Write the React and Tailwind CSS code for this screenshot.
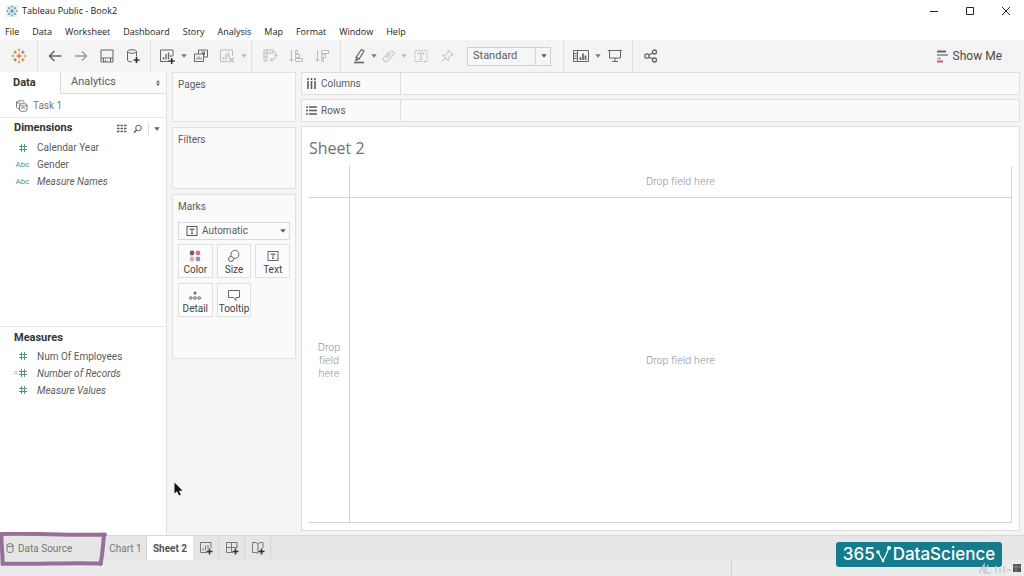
import React, { useState } from 'react';

// --- DATA ---
const menuItems = ['File', 'Data', 'Worksheet', 'Dashboard', 'Story', 'Analysis', 'Map', 'Format', 'Window', 'Help'];

const dimensions = [
    { name: 'Calendar Year', type: 'number' },
    { name: 'Gender', type: 'text' },
    { name: 'Measure Names', type: 'text', italic: true },
];

const measures = [
    { name: 'Num Of Employees', type: 'number' },
    { name: 'Number of Records', type: 'calc', italic: true },
    { name: 'Measure Values', type: 'number', italic: true },
];

// --- ICONS ---
const Icon = ({ size = 16, width, sw = 1, className = '', children }) => (
    <svg width={width || size} height={size} viewBox={`0 0 ${width || size} ${size}`} fill="none" stroke="currentColor" strokeWidth={sw} className={`shrink-0 ${className}`} aria-hidden="true">
        {children}
    </svg>
);

const Caret = ({ className = '' }) => (
    <Icon size={4} width={6} className={className}><path d="M0.3 0.3h5.4L3 3.8z" fill="currentColor" stroke="none" /></Icon>
);

const TableauMark = ({ size = 16, colors }) => (
    <svg width={size} height={size} viewBox="0 0 16 16" fill="none" strokeWidth="1.1" className="shrink-0" aria-hidden="true">
        <path d="M8 5.4v5.2M5.4 8h5.2" stroke={colors[0]} strokeWidth="1.4" />
        <path d="M4.2 2.6v3.2M2.6 4.2h3.2" stroke={colors[1]} />
        <path d="M11.8 2.6v3.2M10.2 4.2h3.2" stroke={colors[2]} />
        <path d="M4.2 10.2v3.2M2.6 11.8h3.2" stroke={colors[2]} />
        <path d="M11.8 10.2v3.2M10.2 11.8h3.2" stroke={colors[1]} />
        <path d="M8 .6v2.8M6.6 2h2.8M8 12.6v2.8M6.6 14h2.8" stroke={colors[3]} />
        <path d="M2 6.6v2.8M.6 8h2.8M14 6.6v2.8M12.6 8h2.8" stroke={colors[3]} />
    </svg>
);

const HashIcon = () => (
    <Icon size={10}><path d="M3.5 1v8M6.5 1v8M1 3.5h8M1 6.5h8" /></Icon>
);

const TextBoxIcon = ({ className }) => (
    <Icon size={12} className={className}>
        <rect x="1" y="1.5" width="10" height="9" />
        <path d="M4 5V4h4v1M6 4v4.5M5 8.5h2" />
    </Icon>
);

const PlusMark = ({ x, y }) => <path d={`M${x - 3} ${y}h6M${x} ${y - 3}v6`} stroke="#333" strokeWidth="1.6" />;

const BackIcon = () => <Icon sw={1.5}><path d="M14.5 8H2.5M7.5 3L2.5 8l5 5" /></Icon>;
const ForwardIcon = () => <Icon sw={1.3}><path d="M2 8h11.500M9 3.500L13.500 8 9 12.500" /></Icon>;
const SaveIcon = () => <Icon><path d="M2 2h12v12H2zM4.500 14v-4h7v4M6.500 12v2M2 10h2.500M11.500 10H14" /></Icon>;
const NewSourceIcon = () => (
    <Icon>
        <ellipse cx="7" cy="3.500" rx="4.500" ry="1.800" />
        <path d="M2.500 3.500v8.500c0 1.200 2 1.800 4.500 1.800M11.500 3.500v5" />
        <PlusMark x={11.5} y={12} />
    </Icon>
);
const NewSheetIcon = () => (
    <Icon>
        <path d="M14 8.500V2H1.500v11.500H10" />
        <path d="M4.500 11.500V9M7 11.500V6M9.500 11.500V4.500M11.800 9V7" strokeWidth="1.3" />
        <PlusMark x={12.7} y={13} />
    </Icon>
);
const DuplicateIcon = () => (
    <Icon>
        <path d="M5.500 6V2h9v7h-4" />
        <path d="M1.500 6h9v7.500h-9z" />
        <path d="M8.500 4h3v3M9 5.500h2.500M4 11.500v-2M6 11.500V8.500M8 11.500V9.500" />
    </Icon>
);
const ClearIcon = () => (
    <Icon>
        <path d="M13.500 8V2H1.500v11.500H9" />
        <path d="M4.500 11.500V9M7 11.500V6M9.500 9V4.500" strokeWidth="1.300" />
        <path d="M10 9.500l5 5M15 9.500l-5 5" strokeWidth="1.300" />
    </Icon>
);
const SwapIcon = () => (
    <Icon>
        <path d="M2 2h3v3H2zM5 2h6v3H5M2 5v8h3V5M2 9h3" />
        <path d="M11 3.500c2 0 3 1.500 3 3.500 0 3-2 5-5 5M12.500 8L14 6.500 15.500 8M10.500 10L8.500 12l2 2" />
    </Icon>
);
const SortAscIcon = () => (
    <Icon><path d="M3.500 2v11M1.500 11l2 2.500 2-2.500M7.500 2.500h2v3h-2zM7.500 6.500h4v3h-4zM7.500 10.500h7v3h-7z" /></Icon>
);
const SortDescIcon = () => (
    <Icon><path d="M3.500 2v11M1.500 11l2 2.500 2-2.500M7.500 2.500h7v3h-7zM7.500 6.500h4v3h-4zM7.500 10.500h2v3h-2z" /></Icon>
);
const HighlightIcon = () => (
    <Icon>
        <path d="M10.500 1.500l2.500 1.500-5 8-3 1.500.300-3.500zM5.300 9l2.700 2" strokeWidth="1.200" />
        <path d="M3 14.500h10" strokeWidth="1.600" />
    </Icon>
);
const ClipIcon = () => (
    <Icon><path d="M4.500 9.500l5-5.500a2 2 0 0 1 3 2.700l-6 6.500a2.600 2.600 0 0 1-3.800-3.500l5.500-6M6 10.500l4-4.500" /></Icon>
);
const LabelIcon = () => (
    <Icon><path d="M2 2.500h12v11H2z" strokeDasharray="2 1" /><path d="M5 6.500v-1.500h6v1.500M8 5v6.500M6.800 11.500h2.400" /></Icon>
);
const PinIcon = () => (
    <Icon><path d="M9 2l5 5-2 .3-2.500 2.500-.3 3L3.700 7.300l3-.3L9 4.200zM6.400 9.800L2.500 13.500" /></Icon>
);
const CardsIcon = () => (
    <Icon width={18}>
        <path d="M1.500 2.500h15v11h-15zM5.500 2.500v11M1.500 5.500h4M1.500 8h4M1.500 10.500h4" />
        <path d="M8.500 12V9M11 12V5.500M13.500 12V7.500" strokeWidth="1.700" />
    </Icon>
);
const PresentIcon = () => (
    <Icon><path d="M1 2.500h14M2.500 2.500v7.500h11V2.500M8 10v3.500M5 13.500h6" /></Icon>
);
const ShareIcon = () => (
    <Icon sw={1.3}>
        <circle cx="4" cy="8" r="2.200" />
        <circle cx="11.500" cy="4" r="2" />
        <circle cx="11.500" cy="12" r="2" />
        <path d="M6 7l3.700-2M6 9l3.700 2" />
    </Icon>
);

// --- SMALL PARTS ---
const ToolButton = ({ label, narrow, disabled, children }) => (
    <button type="button" aria-label={label} disabled={disabled} className={`flex h-6 items-center justify-center text-[#666] disabled:text-[#bcbcbc] ${narrow ? 'w-5' : 'w-6'}`}>
        {children}
    </button>
);

const CaretButton = ({ label, disabled }) => (
    <button type="button" aria-label={label} disabled={disabled} className="flex h-6 w-[6px] items-center text-[#777] disabled:text-[#bcbcbc]">
        <Caret />
    </button>
);

const Field = ({ field }) => (
    <li>
        <button type="button" className="flex h-[17px] w-full items-center text-left">
            <span className="flex w-[37px] items-center justify-center pl-2 text-[8px] text-[#4f958e]">
                {field.type === 'text' && 'Abc'}
                {field.type === 'number' && <HashIcon />}
                {field.type === 'calc' && <><span className="w-1">=</span><HashIcon /><span className="w-1" /></>}
            </span>
            <span className={field.italic ? 'italic' : ''}>{field.name}</span>
        </button>
    </li>
);

const Card = ({ title, className, children }) => (
    <section className={`border border-[#e2e2e2] bg-[#fafafa] px-[5px] py-1 ${className}`}>
        <h2 className="leading-4">{title}</h2>
        {children}
    </section>
);

const MarkButton = ({ label, children }) => (
    <button type="button" className="flex h-[34px] flex-col items-center justify-between border border-[#e0e0e0] bg-[#fcfcfc] pt-1 leading-[14px] text-[#444]">
        <span className="flex h-[14px] items-center text-[#666]">{children}</span>
        {label}
    </button>
);

const Shelf = ({ label, icon }) => (
    <div className="flex h-[23px] border border-[#dedede] bg-[#fafafa]">
        <div className="flex w-[99px] items-center gap-1 border-r border-[#dedede] pl-1">
            {icon}
            <span>{label}</span>
        </div>
        <div className="flex-1" />
    </div>
);

// --- MAIN COMPONENT ---
const App = () => {
    const [fit, setFit] = useState('Standard');
    const [markType, setMarkType] = useState('Automatic');

    return (
        <div className="relative flex min-h-screen flex-col overflow-hidden bg-[#f4f4f4] font-['Roboto','Liberation_Sans',sans-serif] text-[10px] text-[#5c5c5c]">
            {/* --- TITLE BAR --- */}
            <header className="bg-white font-['Open_Sans','Noto_Sans',sans-serif] text-[#222]">
                <div className="flex h-[22px] items-center justify-between pl-[6px]">
                    <div className="flex items-center gap-1">
                        <span className="bg-[#e6f0f4]"><TableauMark size={12} colors={['#3f7f98', '#4f8ba3', '#4f8ba3', '#6da0b4']} /></span>
                        <h1 className="text-[9px]">Tableau Public - Book2</h1>
                    </div>
                    <div className="flex">
                        <button type="button" aria-label="Minimize" className="flex w-9 justify-center"><Icon size={10}><path d="M1 5.500h8" /></Icon></button>
                        <button type="button" aria-label="Maximize" className="flex w-9 justify-center"><Icon size={10}><path d="M1.500 1.500h7v7h-7z" /></Icon></button>
                        <button type="button" aria-label="Close" className="flex w-9 justify-center"><Icon size={10}><path d="M1 1l8 8M9 1L1 9" /></Icon></button>
                    </div>
                </div>
                <nav className="flex h-[18px] items-center gap-[13px] px-[5px] pt-[2px] text-[9px]">
                    {menuItems.map((item) => <button type="button" key={item}>{item}</button>)}
                </nav>
            </header>

            {/* --- TOOLBAR --- */}
            <div className="flex h-8 items-center bg-[#f4f4f4]">
                <div className="flex h-full w-[38px] items-center justify-center border-r border-[#e0e0e0]">
                    <TableauMark colors={['#e8762d', '#c9803f', '#6b7c93', '#c9a55c']} />
                </div>
                <div className="flex h-full items-center gap-[2px] border-r border-[#e0e0e0] px-[5px]">
                    <ToolButton label="Back"><BackIcon /></ToolButton>
                    <ToolButton label="Forward"><span className="text-[#999]"><ForwardIcon /></span></ToolButton>
                    <ToolButton label="Save"><SaveIcon /></ToolButton>
                    <ToolButton label="New data source"><NewSourceIcon /></ToolButton>
                </div>
                <div className="flex h-full items-center gap-[2px] border-r border-[#e0e0e0] px-1">
                    <ToolButton label="New worksheet"><NewSheetIcon /></ToolButton>
                    <CaretButton label="New worksheet options" />
                    <ToolButton label="Duplicate"><DuplicateIcon /></ToolButton>
                    <ToolButton label="Clear sheet" disabled><ClearIcon /></ToolButton>
                    <CaretButton label="Clear options" disabled />
                </div>
                <div className="flex h-full items-center gap-[2px] border-r border-[#e0e0e0] px-[6px]">
                    <ToolButton label="Swap" disabled><SwapIcon /></ToolButton>
                    <ToolButton label="Sort ascending" disabled><SortAscIcon /></ToolButton>
                    <ToolButton label="Sort descending" disabled><SortDescIcon /></ToolButton>
                </div>
                <div className="flex h-full items-center gap-[2px] border-r border-[#e0e0e0] pl-2 pr-3">
                    <ToolButton label="Highlight" narrow><HighlightIcon /></ToolButton>
                    <CaretButton label="Highlight options" />
                    <ToolButton label="Group" narrow disabled><ClipIcon /></ToolButton>
                    <CaretButton label="Group options" disabled />
                    <ToolButton label="Show labels" disabled><LabelIcon /></ToolButton>
                    <ToolButton label="Fix axes" disabled><PinIcon /></ToolButton>
                    <label className="relative ml-[6px] block">
                        <select aria-label="Fit" value={fit} onChange={(e) => setFit(e.target.value)} className="block h-[19px] w-[84px] appearance-none border border-[#cfcfcf] bg-[#f6f6f6] pl-[5px] text-[11px] leading-4">
                            <option>Standard</option>
                            <option>Fit Width</option>
                            <option>Fit Height</option>
                            <option>Entire View</option>
                        </select>
                        <span className="pointer-events-none absolute inset-y-0 right-0 flex w-4 items-center justify-center border-l border-[#d6d6d6]"><Caret /></span>
                    </label>
                </div>
                <div className="flex h-full items-center gap-[2px] border-r border-[#e0e0e0] px-[5px]">
                    <ToolButton label="Show cards"><CardsIcon /></ToolButton>
                    <CaretButton label="Card options" />
                    <ToolButton label="Presentation mode"><PresentIcon /></ToolButton>
                </div>
                <div className="pl-[6px]"><ToolButton label="Share"><ShareIcon /></ToolButton></div>
                <button type="button" className="ml-auto mr-[22px] flex items-center gap-1 text-[12px] text-[#4a4a4a]">
                    <Icon size={13}>
                        <path d="M1 1.500h9" stroke="#666" strokeWidth="2" />
                        <path d="M1 5h11" stroke="#8aa2bb" strokeWidth="2" />
                        <path d="M1 8.500h4" stroke="#e59a9a" strokeWidth="2" />
                        <path d="M1 11.500h6" stroke="#c9616b" strokeWidth="2" />
                    </Icon>
                    Show Me
                </button>
            </div>

            <main className="flex flex-1">
                {/* --- DATA PANE --- */}
                <aside className="flex w-[167px] shrink-0 flex-col border-r border-[#e2e2e2] bg-white">
                    <div className="flex h-[22px]">
                        <button type="button" className="w-[60px] pl-[13px] text-left text-[11px] font-bold text-[#333]">Data</button>
                        <button type="button" className="flex flex-1 items-center justify-between border-b border-l border-[#dcdcdc] bg-[#fafafa] pl-[10px] pr-[6px] text-[11px]">
                            Analytics
                            <Icon size={6} width={4}><path d="M2 0L3.800 2.500H.2zM2 6L3.800 3.500H.2z" fill="currentColor" stroke="none" /></Icon>
                        </button>
                    </div>
                    <button type="button" className="flex h-6 items-center gap-[5px] border-b border-[#e6e6e6] pl-[15px] text-[#777]">
                        <Icon size={13}>
                            <path d="M9 3.500V2.500C9 1.500 1.500 1.500 1.500 3v5c0 1 1 1.500 2.500 1.500M1.500 3c0 1.200 3 1.500 4 1" />
                            <path d="M4.500 6c0-1.800 7.500-1.800 7.500 0v5c0 1.800-7.500 1.800-7.500 0zM4.500 6c0 1.500 7.500 1.500 7.500 0M6 10l2-1.500 2 1" />
                        </Icon>
                        Task 1
                    </button>
                    <section className="flex-1 basis-0">
                        <div className="flex h-[21px] items-center pl-[14px] pr-[6px]">
                            <h2 className="flex-1 text-[11px] font-bold text-[#333]">Dimensions</h2>
                            <button type="button" aria-label="View data">
                                <Icon size={10}><path d="M0 1.500h10M0 4.500h10M0 7.500h10" strokeDasharray="2.500 1" strokeWidth="1.500" /></Icon>
                            </button>
                            <button type="button" aria-label="Find field" className="ml-[6px]">
                                <Icon size={10}><circle cx="5.500" cy="4" r="2.800" /><path d="M3.500 6L1 8.800" strokeWidth="1.300" /></Icon>
                            </button>
                            <button type="button" aria-label="Pane options" className="ml-[5px] flex h-3 items-center border-l border-[#ddd] pl-[5px]"><Caret /></button>
                        </div>
                        <ul>{dimensions.map((f) => <Field key={f.name} field={f} />)}</ul>
                    </section>
                    <section className="flex-1 basis-0 border-t border-[#e6e6e6] pt-px">
                        <h2 className="pl-[14px] text-[11px] font-bold leading-5 text-[#333]">Measures</h2>
                        <ul>{measures.map((f) => <Field key={f.name} field={f} />)}</ul>
                    </section>
                </aside>

                {/* --- CARDS --- */}
                <div className="flex w-[134px] shrink-0 flex-col gap-[5px] px-[5px]">
                    <Card title="Pages" className="h-[50px]" />
                    <Card title="Filters" className="h-[62px]" />
                    <Card title="Marks" className="h-[165px]">
                        <label className="relative mt-[7px] block">
                            <TextBoxIcon className="absolute left-2 top-[3px]" />
                            <select aria-label="Mark type" value={markType} onChange={(e) => setMarkType(e.target.value)} className="block h-[18px] w-full appearance-none border border-[#d9d9d9] bg-[#fbfbfb] pl-[23px] text-[10px] leading-4">
                                <option>Automatic</option>
                                <option>Bar</option>
                                <option>Line</option>
                                <option>Text</option>
                            </select>
                            <Caret className="absolute right-1 top-[7px]" />
                        </label>
                        <div className="mt-1 grid grid-cols-3 gap-x-1 gap-y-[5px]">
                            <MarkButton label="Color">
                                <Icon size={14}>
                                    <g stroke="none">
                                        <circle cx="4" cy="4" r="2.400" fill="#6e5f6b" />
                                        <circle cx="10" cy="4" r="2.400" fill="#d0728a" />
                                        <circle cx="4" cy="10" r="2.400" fill="#eaa99c" />
                                        <circle cx="10" cy="10" r="2.400" fill="#8399ab" />
                                    </g>
                                </Icon>
                            </MarkButton>
                            <MarkButton label="Size">
                                <Icon size={14}><path d="M4.500 7.500A4 4 0 1 1 7 9.300" /><circle cx="4" cy="10" r="2.500" /></Icon>
                            </MarkButton>
                            <MarkButton label="Text"><TextBoxIcon /></MarkButton>
                            <MarkButton label="Detail">
                                <Icon size={14}>
                                    <circle cx="7" cy="5" r="1.500" fill="currentColor" stroke="none" />
                                    <circle cx="2.800" cy="10" r="1.300" /><circle cx="7" cy="10" r="1.300" /><circle cx="11.200" cy="10" r="1.300" />
                                </Icon>
                            </MarkButton>
                            <MarkButton label="Tooltip">
                                <Icon size={14}><path d="M1.500 2.500h11v7H9v3L6.500 9.500h-5z" /></Icon>
                            </MarkButton>
                        </div>
                    </Card>
                </div>

                {/* --- SHELVES AND SHEET --- */}
                <div className="mb-1 mr-1 flex min-w-0 flex-1 flex-col gap-1">
                    <Shelf label="Columns" icon={<Icon size={11}><path d="M2 0v2M5.500 0v2M9 0v2M2 3v8M5.500 3v8M9 3v8" strokeWidth="1.600" /></Icon>} />
                    <Shelf label="Rows" icon={<Icon size={11}><path d="M0 2h2M0 5.500h2M0 9h2M3 2h8M3 5.500h8M3 9h8" strokeWidth="1.500" /></Icon>} />
                    <section className="flex flex-1 flex-col border border-[#dedede] bg-white p-[7px]">
                        <h2 className="h-8 pt-[2px] font-['Open_Sans',sans-serif] text-[16px] leading-6 text-[#707070]">Sheet 2</h2>
                        <div className="grid flex-1 grid-cols-[41px_1fr] grid-rows-[32px_1fr] border-b border-r border-[#d2d2d2] font-['Inter',sans-serif] font-light text-[#999]">
                            <div className="border-b border-r border-[#d2d2d2]" />
                            <div className="flex items-center justify-center border-b border-[#d2d2d2]">Drop field here</div>
                            <div className="flex items-center justify-center border-r border-[#d2d2d2] px-1 text-center leading-[13px]">Drop field here</div>
                            <div className="flex items-center justify-center">Drop field here</div>
                        </div>
                    </section>
                </div>
            </main>

            {/* --- SHEET TABS --- */}
            <footer className="bg-[#ebebeb]">
                <div className="flex h-[25px] border-t border-[#d8d8d8] bg-[#e6e6e6] text-[#777]">
                    <div className="relative flex w-[105px]">
                        <button type="button" className="flex flex-1 items-center gap-1 pl-[6px]">
                            <Icon size={10} width={8}><ellipse cx="4" cy="2.200" rx="3" ry="1.500" /><path d="M1 2.200v6c0 1.600 6 1.600 6 0v-6" /></Icon>
                            Data Source
                        </button>
                        <svg viewBox="0 0 108 36" className="pointer-events-none absolute -left-px -top-1 h-9 w-27" fill="none" stroke="#967099" strokeWidth="4" strokeLinecap="round" strokeLinejoin="round" aria-hidden="true">
                            <path d="M3 2C34 .8 70 3.800 106 2.500M105 3c-1 10-1.500 20-3.500 29M102 31.500c-34-1-66 1-98 0M3.500 32C4 22 2 12 2.500 2" />
                        </svg>
                    </div>
                    <button type="button" className="w-[42px] border-r border-[#d6d6d6]">Chart 1</button>
                    <button type="button" className="w-[46px] bg-white font-bold text-[#555]">Sheet 2</button>
                    <button type="button" aria-label="New worksheet tab" className="flex w-[26px] items-center justify-center border-r border-[#d6d6d6]">
                        <Icon size={14}><path d="M12 7V1.500H1.500v10H8M4 9.500V7M6.500 9.500V4.500M9 8V4" /><PlusMark x={10.5} y={10.5} /></Icon>
                    </button>
                    <button type="button" aria-label="New dashboard tab" className="flex w-[26px] items-center justify-center border-r border-[#d6d6d6]">
                        <Icon size={14}><path d="M12 7V1.500H1.500v10H8M6.500 1.500v10M1.500 6.500H12" /><PlusMark x={10.5} y={10.5} /></Icon>
                    </button>
                    <button type="button" aria-label="New story tab" className="flex w-[26px] items-center justify-center border-r border-[#d6d6d6]">
                        <Icon size={14}><path d="M12 7V1.500H9L7 3 5 1.500H1.500v10H5l2 1M7 3v9" /><PlusMark x={10.5} y={10.5} /></Icon>
                    </button>
                </div>
                <div className="flex h-4 justify-end">
                    <div className="w-[293px] border-l border-[#cfcfcf]" />
                </div>
            </footer>

            {/* --- WATERMARK LOGO --- */}
            <div className="absolute bottom-[9px] right-[22px] flex h-[25px] w-[166px] items-center justify-center rounded-[3px] bg-[#157c8d] font-['Inter',sans-serif] text-[17px] font-medium text-white">
                365
                <svg width="18" height="20" viewBox="0 0 18 20" fill="none" stroke="white" strokeWidth="1.3" aria-hidden="true">
                    <path d="M3 7l5 9 6-13" />
                    <circle cx="3" cy="7" r="1.800" fill="white" stroke="none" />
                    <circle cx="14" cy="3" r="2" fill="white" stroke="none" />
                    <circle cx="8" cy="16" r="1.300" fill="white" stroke="none" />
                </svg>
                DataScience
            </div>
            <svg width="44" height="14" viewBox="0 0 44 14" className="absolute bottom-0 right-[2px]" fill="none" aria-hidden="true">
                <path d="M1 11L6 3v8M10 3l-3 8h6M18 4v7M22 6v5M26 4v7M29 8h4" stroke="#c4cdd0" strokeWidth="1.500" />
                <path d="M35 2h8v8h-8z" fill="#555" />
                <path d="M35 5h8M38 2v8" stroke="#888" />
            </svg>

            {/* --- MOUSE POINTER --- */}
            <svg width="9" height="14" viewBox="0 0 9 14" className="absolute left-[174px] top-[482px]" aria-hidden="true">
                <path d="M.5.5v11l2.500-2.300L5 13.500l1.800-.8L5 8.700h3.500z" fill="#111" />
            </svg>
        </div>
    );
};

export default App;
